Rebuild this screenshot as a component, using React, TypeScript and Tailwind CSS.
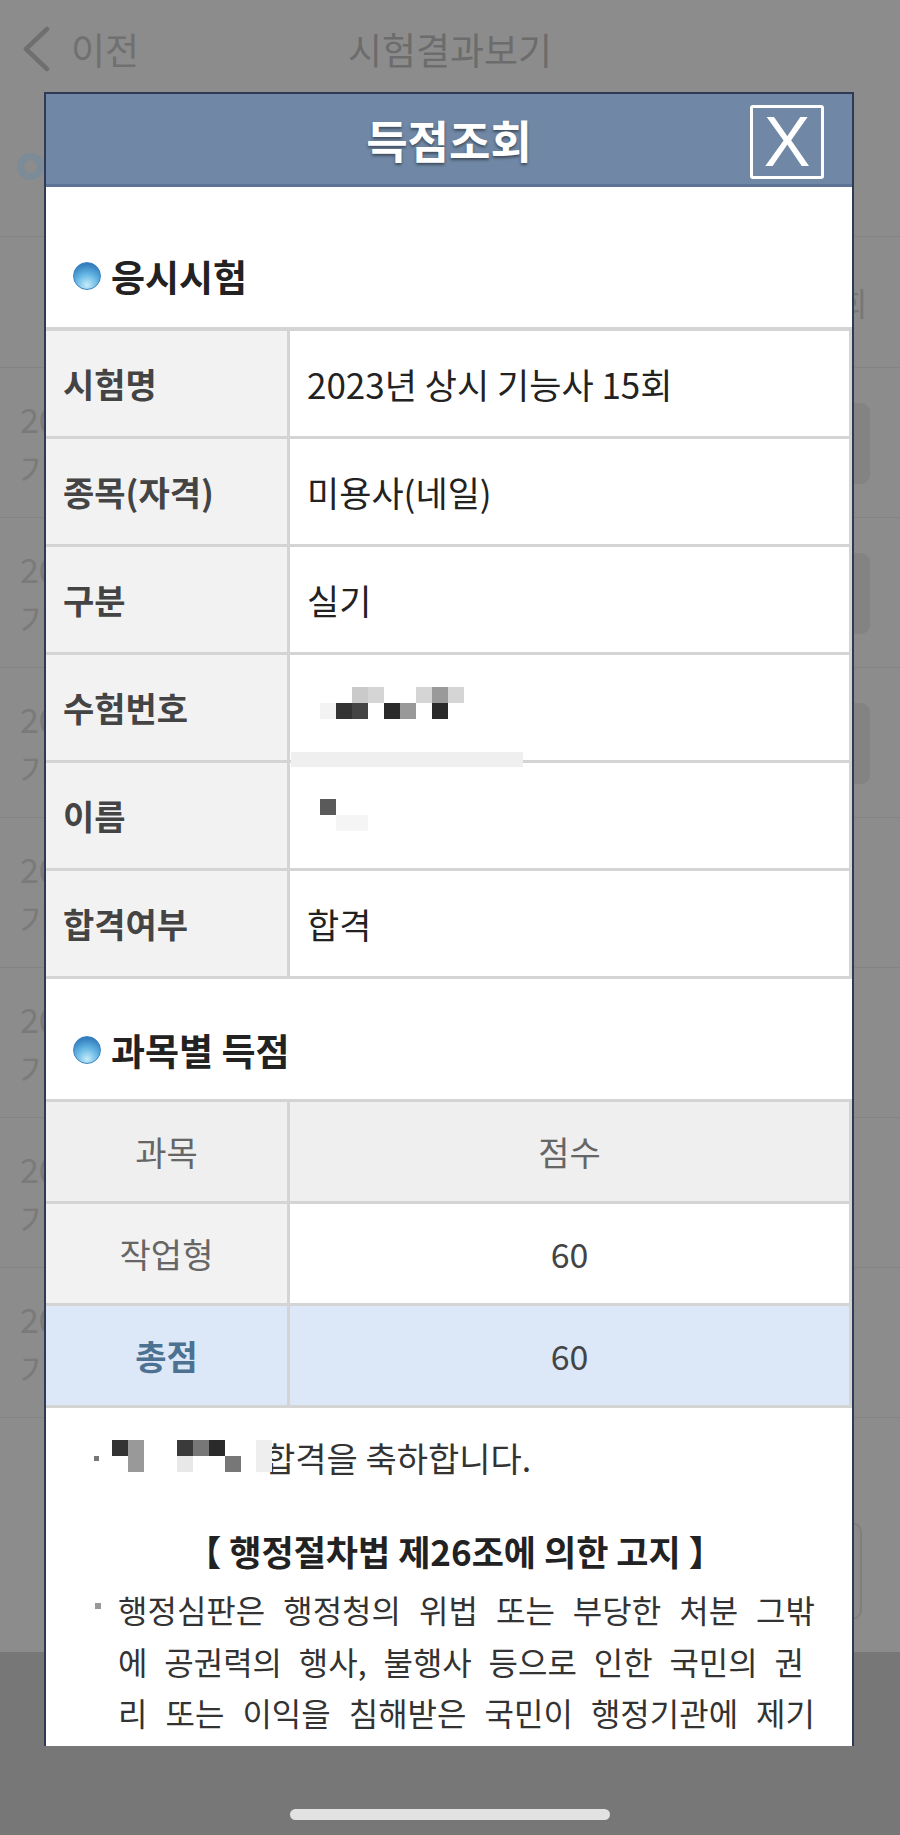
import React from 'react';

const infoRows: { label: string; value: string; mask?: 'number' | 'name' }[] = [
  { label: '시험명', value: '2023년 상시 기능사 15회' },
  { label: '종목(자격)', value: '미용사(네일)' },
  { label: '구분', value: '실기' },
  { label: '수험번호', value: '', mask: 'number' },
  { label: '이름', value: '', mask: 'name' },
  { label: '합격여부', value: '합격' },
];

function Ball() {
  return (
    <span className="w-[28px] h-[28px] rounded-full shrink-0 border border-[#3d86c2] bg-[radial-gradient(circle_at_50%_85%,#c4ecfb_0%,#62b3e2_45%,#1b62aa_100%)]" />
  );
}

function SectionTitle({ children }: { children: React.ReactNode }) {
  return (
    <div className="flex items-center gap-[10px] h-[44px] pl-[27px]">
      <Ball />
      <h3 className="text-[37px] leading-[44px] font-bold text-[#222]">{children}</h3>
    </div>
  );
}

// pixelated privacy blocks
function Px({ l, t, c, w = 16, h = 16 }: { l: number; t: number; c: string; w?: number; h?: number }) {
  return <span className="absolute z-10" style={{ left: l, top: t, width: w, height: h, background: c }} />;
}

function BgRow({ button }: { button?: boolean }) {
  return (
    <div className="h-[150px] border-b border-[#838383] flex items-start justify-between">
      <div className="w-[44px] overflow-hidden whitespace-nowrap pl-[20px] pt-[30px] text-[34px] leading-[42px] text-[#7a7a7a]">
        <div>2023</div>
        <div className="mt-[9px]">기능사</div>
      </div>
      {button && <div className="mt-[35px] mr-[30px] w-[110px] h-[81px] rounded-[9px] bg-[#838383]" />}
    </div>
  );
}

export default function App() {
  return (
    <div className="relative w-[900px] h-[1835px] overflow-hidden bg-[#8c8c8c] font-['Noto_Sans_CJK_KR',sans-serif]">
      {/* dimmed page behind the dialog */}
      <div className="flex flex-col h-full">
        <div className="h-[236px]">
          <div className="h-[98px] grid grid-cols-[1fr_auto_1fr] items-center">
            <div className="flex items-center gap-[20px] pl-[21px]">
              <svg width="30" height="46" viewBox="0 0 30 46">
                <polyline points="26,3 5,23 26,43" fill="none" stroke="#6f6f6f" strokeWidth="4.5" strokeLinecap="round" strokeLinejoin="round" />
              </svg>
              <span className="text-[37px] leading-[44px] text-[#707070]">이전</span>
            </div>
            <span className="text-[37px] leading-[44px] text-[#6c6c6c]">시험결과보기</span>
            <div />
          </div>
          <div className="ml-[17px] mt-[55px] w-[27px] h-[27px] rounded-full border-[7px] border-[#7b8b97]" />
        </div>
        <div className="h-[132px] border-y border-[#838383] flex items-center justify-end">
          <div className="w-[46px] overflow-hidden whitespace-nowrap">
            <span className="block -ml-[16px] text-[32px] leading-[40px] text-[#777]">회</span>
          </div>
        </div>
        <BgRow button />
        <BgRow button />
        <BgRow button />
        <BgRow />
        <BgRow />
        <BgRow />
        <BgRow />
        <div className="h-[234px] flex justify-end items-start">
          <div className="mt-[104px] mr-[38px] w-[200px] h-[98px] rounded-[10px] border-2 border-[#7f7f7f] bg-[#8a8a8a]" />
        </div>
        <div className="flex-1 bg-[#777777] flex flex-col items-center justify-end pb-[15px]">
          <div className="w-[320px] h-[11px] rounded-full bg-[#e2e2e2]" />
        </div>
      </div>

      {/* dialog */}
      <div className="absolute left-[44px] top-[92px] w-[810px] h-[1654px] bg-white border-x-2 border-t-2 border-[#2e3a56] overflow-hidden flex flex-col">
        <div className="relative h-[93px] shrink-0 bg-[#7088a5] border-b-[3px] border-[#5f7494] flex items-center justify-center">
          <h2 className="text-[45px] font-bold text-white leading-none [text-shadow:0_2px_3px_rgba(0,0,0,0.45)]">득점조회</h2>
          <button className="absolute right-[28px] top-[11px] w-[74px] h-[74px] border-[3px] border-white rounded-[3px] flex items-center justify-center text-white text-[70px] leading-none font-['Liberation_Sans',sans-serif]">
            X
          </button>
        </div>

        <div className="pt-[67px] pb-[29px]">
          <SectionTitle>응시시험</SectionTitle>
        </div>

        <div className="border-t-[4px] border-[#d4d4d4]">
          {infoRows.map((r) => (
            <div key={r.label} className="flex h-[108px] border-b-[3px] border-[#d4d4d4]">
              <div className="w-[244px] shrink-0 bg-[#f2f2f2] border-r-[3px] border-[#d4d4d4] flex items-center pl-[17px] text-[34px] leading-[44px] font-bold text-[#444]">
                {r.label}
              </div>
              <div className="relative flex-1 border-r-[3px] border-[#d4d4d4] flex items-center pl-[17px] text-[35px] leading-[44px] text-[#222]">
                {r.value}
                {r.mask === 'number' && (
                  <>
                    <Px l={62} t={32} c="#cacaca" />
                    <Px l={78} t={32} c="#d5d5d5" />
                    <Px l={126} t={32} c="#d5d5d5" />
                    <Px l={142} t={32} c="#9a9a9a" />
                    <Px l={158} t={32} c="#d5d5d5" />
                    <Px l={30} t={48} c="#f3f3f3" />
                    <Px l={46} t={48} c="#333333" />
                    <Px l={62} t={48} c="#444444" />
                    <Px l={94} t={48} c="#2a2a2a" />
                    <Px l={110} t={48} c="#999999" />
                    <Px l={142} t={48} c="#2a2a2a" />
                    <Px l={1} t={97} c="#efefef" w={232} h={15} />
                  </>
                )}
                {r.mask === 'name' && (
                  <>
                    <Px l={30} t={36} c="#5a5a5a" />
                    <Px l={46} t={52} c="#f5f5f5" w={32} />
                  </>
                )}
              </div>
            </div>
          ))}
        </div>

        <div className="pt-[49px] pb-[27px]">
          <SectionTitle>과목별 득점</SectionTitle>
        </div>

        <div className="border-t-[3px] border-[#d4d4d4] text-[34px] leading-[44px]">
          <div className="flex h-[102px] border-b-[3px] border-[#d4d4d4] bg-[#efefef] text-[#666]">
            <div className="w-[244px] shrink-0 border-r-[3px] border-[#d4d4d4] flex items-center justify-center">과목</div>
            <div className="flex-1 border-r-[3px] border-[#d4d4d4] flex items-center justify-center">점수</div>
          </div>
          <div className="flex h-[102px] border-b-[3px] border-[#d4d4d4]">
            <div className="w-[244px] shrink-0 bg-[#f2f2f2] border-r-[3px] border-[#d4d4d4] flex items-center justify-center text-[#666]">작업형</div>
            <div className="flex-1 border-r-[3px] border-[#d4d4d4] flex items-center justify-center text-[#444]">60</div>
          </div>
          <div className="flex h-[102px] border-b-[3px] border-[#d4d4d4] bg-[#dce8f8]">
            <div className="w-[244px] shrink-0 border-r-[3px] border-[#d4d4d4] flex items-center justify-center font-bold text-[#4d7190]">총점</div>
            <div className="flex-1 border-r-[3px] border-[#d4d4d4] flex items-center justify-center text-[#444]">60</div>
          </div>
        </div>

        <div className="mt-[30px] h-[40px] flex items-center text-[34px] leading-[40px] text-[#333]">
          <span className="ml-[48px] w-[5px] h-[5px] bg-[#777] shrink-0" />
          <span className="relative w-[165px] h-[40px] shrink-0">
            <Px l={13} t={2} c="#333333" />
            <Px l={29} t={2} c="#999999" h={32} />
            <Px l={78} t={2} c="#3a3a3a" />
            <Px l={94} t={2} c="#777777" />
            <Px l={110} t={2} c="#2a2a2a" />
            <Px l={126} t={18} c="#777777" />
            <Px l={78} t={18} c="#e8e8e8" />
            <Px l={157} t={2} c="#eeeeee" h={32} />
          </span>
          <span className="whitespace-nowrap">합격을 축하합니다.</span>
        </div>

        <div className="mt-[51px] h-[44px] flex items-center justify-center pl-[12px] text-[35px] leading-[44px] font-bold text-[#222] whitespace-nowrap">
          【 행정절차법 제26조에 의한 고지 】
        </div>

        <div className="mt-[11px] relative pl-[72px] text-[32px] leading-[51.5px] text-[#333]">
          <span className="absolute left-[49px] top-[19px] w-[6px] h-[6px] bg-[#999]" />
          <div className="w-[697px] text-justify [text-align-last:justify]">행정심판은 행정청의 위법 또는 부당한 처분 그밖</div>
          <div className="w-[686px] text-justify [text-align-last:justify]">에 공권력의 행사, 불행사 등으로 인한 국민의 권</div>
          <div className="w-[697px] text-justify [text-align-last:justify]">리 또는 이익을 침해받은 국민이 행정기관에 제기</div>
          <div className="w-[697px]">하는 권리구제절차입니다.</div>
        </div>
      </div>
    </div>
  );
}
